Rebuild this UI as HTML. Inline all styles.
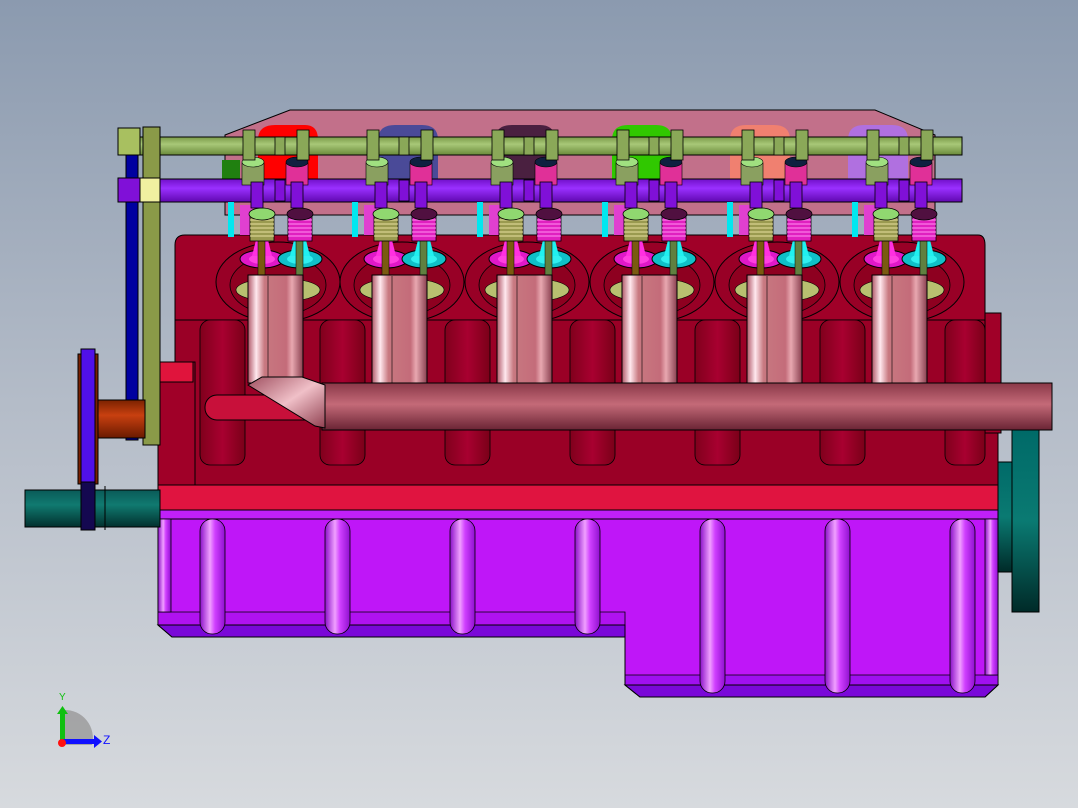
<!DOCTYPE html>
<html><head><meta charset="utf-8"><style>
html,body{margin:0;padding:0;width:1078px;height:808px;overflow:hidden}
svg{display:block}
</style></head><body>
<svg width="1078" height="808" viewBox="0 0 1078 808" xmlns="http://www.w3.org/2000/svg">
<defs>
<linearGradient id="bg" x1="0" y1="0" x2="0" y2="1"><stop offset="0" stop-color="#8b9aaf"/><stop offset="0.5" stop-color="#b4bcc8"/><stop offset="1" stop-color="#d7dade"/></linearGradient>
<linearGradient id="pipe" x1="0" y1="0" x2="1" y2="0"><stop offset="0" stop-color="#b05868"/><stop offset="0.15" stop-color="#ffe8ee"/><stop offset="0.3" stop-color="#c87880"/><stop offset="0.7" stop-color="#c46c7a"/><stop offset="0.8" stop-color="#e8a8b0"/><stop offset="1" stop-color="#8a4050"/></linearGradient>
<linearGradient id="man" x1="0" y1="0" x2="0" y2="1"><stop offset="0" stop-color="#8a3848"/><stop offset="0.45" stop-color="#c46a78"/><stop offset="1" stop-color="#6a2434"/></linearGradient>
<linearGradient id="noz" x1="0" y1="0" x2="1" y2="1"><stop offset="0" stop-color="#a05060"/><stop offset="0.5" stop-color="#f0c0c8"/><stop offset="1" stop-color="#904050"/></linearGradient>
<linearGradient id="rib" x1="0" y1="0" x2="1" y2="0"><stop offset="0" stop-color="#8a10c8"/><stop offset="0.4" stop-color="#f0a0ff"/><stop offset="0.6" stop-color="#d040ff"/><stop offset="1" stop-color="#9010d0"/></linearGradient>
<linearGradient id="teal" x1="0" y1="0" x2="0" y2="1"><stop offset="0" stop-color="#0a5a58"/><stop offset="0.4" stop-color="#107a70"/><stop offset="1" stop-color="#02302e"/></linearGradient>
<linearGradient id="tealv" x1="0" y1="0" x2="0" y2="1"><stop offset="0" stop-color="#006a68"/><stop offset="0.5" stop-color="#0a7a72"/><stop offset="1" stop-color="#002a28"/></linearGradient>
<linearGradient id="orange" x1="0" y1="0" x2="0" y2="1"><stop offset="0" stop-color="#7a2200"/><stop offset="0.4" stop-color="#c84010"/><stop offset="1" stop-color="#6a1a00"/></linearGradient>
<linearGradient id="cam" x1="0" y1="0" x2="0" y2="1"><stop offset="0" stop-color="#7a9a48"/><stop offset="0.4" stop-color="#a8c878"/><stop offset="1" stop-color="#6a8a3a"/></linearGradient>
<linearGradient id="purp" x1="0" y1="0" x2="0" y2="1"><stop offset="0" stop-color="#7010c8"/><stop offset="0.4" stop-color="#9a30ff"/><stop offset="1" stop-color="#6008b0"/></linearGradient>
<linearGradient id="redcyl" x1="0" y1="0" x2="1" y2="0"><stop offset="0" stop-color="#80001c"/><stop offset="0.5" stop-color="#a80030"/><stop offset="1" stop-color="#7a0018"/></linearGradient>
<g id="cyl">
  <ellipse cx="30" cy="282" rx="62" ry="40" fill="#980026" stroke="#000" stroke-width="1"/>
  <ellipse cx="30" cy="285" rx="48" ry="30" fill="#8e0020" stroke="#000" stroke-width="0.8"/>
  <ellipse cx="30" cy="290" rx="42" ry="12" fill="#b8c070" stroke="#000" stroke-width="0.6"/>
  <rect x="-20" y="202" width="6" height="35" fill="#00e8f0"/>
  <rect x="-8" y="205" width="14" height="30" fill="#e040d0"/>
  <ellipse cx="14" cy="259" rx="22" ry="9" fill="#e018c8" stroke="#000" stroke-width="1"/>
  <ellipse cx="14" cy="259" rx="13" ry="5" fill="#ff40e0"/>
  <ellipse cx="52" cy="259" rx="22" ry="9" fill="#10c0c8" stroke="#000" stroke-width="1"/>
  <ellipse cx="52" cy="259" rx="13" ry="5" fill="#30f0f0"/>
  <path d="M8 240 L20 240 L24 256 L4 256Z" fill="#ff30e0"/>
  <path d="M46 240 L58 240 L62 256 L42 256Z" fill="#20f0f0"/>
  <rect x="10" y="235" width="7" height="45" fill="#7a5a10" stroke="#000" stroke-width="0.5"/>
  <rect x="48" y="235" width="7" height="45" fill="#608040" stroke="#000" stroke-width="0.5"/>
  <rect x="2" y="215" width="24" height="26" fill="#9a9a50" stroke="#000" stroke-width="0.8"/>
  <path d="M2 220h24M2 224h24M2 228h24M2 232h24M2 236h24" stroke="#e8e0a0" stroke-width="1"/>
  <ellipse cx="14" cy="214" rx="13" ry="6" fill="#90d870" stroke="#000" stroke-width="0.8"/>
  <rect x="40" y="215" width="24" height="26" fill="#e020c0" stroke="#000" stroke-width="0.8"/>
  <path d="M40 220h24M40 224h24M40 228h24M40 232h24M40 236h24" stroke="#ff90f0" stroke-width="1"/>
  <ellipse cx="52" cy="214" rx="13" ry="6" fill="#501040" stroke="#000" stroke-width="0.8"/>
  <rect x="-6" y="163" width="22" height="22" fill="#8aa060" stroke="#000" stroke-width="0.6"/>
  <ellipse cx="5" cy="162" rx="11" ry="5" fill="#a0e080" stroke="#000" stroke-width="0.6"/>
  <rect x="38" y="163" width="22" height="22" fill="#e03098" stroke="#000" stroke-width="0.6"/>
  <ellipse cx="49" cy="162" rx="11" ry="5" fill="#102040" stroke="#000" stroke-width="0.6"/>
  <rect x="0" y="275" width="55" height="108" fill="url(#pipe)" stroke="#000" stroke-width="1"/>
  <line x1="20" y1="276" x2="20" y2="383" stroke="#000" stroke-width="0.6"/>
  <rect x="-5" y="130" width="12" height="30" fill="#8aa858" stroke="#000" stroke-width="0.8"/>
  <rect x="27" y="137" width="10" height="18" fill="#8aa858" stroke="#000" stroke-width="0.8"/>
  <rect x="49" y="130" width="12" height="30" fill="#8aa858" stroke="#000" stroke-width="0.8"/>
  <rect x="3" y="182" width="12" height="26" fill="#8010d8" stroke="#000" stroke-width="0.8"/>
  <rect x="27" y="180" width="10" height="21" fill="#8010d8" stroke="#000" stroke-width="0.8"/>
  <rect x="43" y="182" width="12" height="26" fill="#8010d8" stroke="#000" stroke-width="0.8"/>
</g>
</defs>
<rect width="1078" height="808" fill="url(#bg)"/>

<path d="M225 135 L290 110 L875 110 L935 135 L935 215 L225 215Z" fill="#c2708a" stroke="#000" stroke-width="1"/>
<path d="M258 140 Q258 125 275 125 L305 125 Q318 125 318 140 L318 185 L258 185Z" fill="#ff0000"/>
<path d="M378 140 Q378 125 395 125 L422 125 Q438 125 438 140 L438 185 L378 185Z" fill="#4a4a98"/>
<path d="M495 140 Q495 125 512 125 L540 125 Q555 125 555 140 L555 185 L495 185Z" fill="#4a2040"/>
<path d="M612 140 Q612 125 628 125 L656 125 Q672 125 672 140 L672 185 L612 185Z" fill="#30c800"/>
<path d="M730 140 Q730 125 746 125 L774 125 Q790 125 790 140 L790 185 L730 185Z" fill="#f08070"/>
<path d="M848 140 Q848 125 864 125 L892 125 Q908 125 908 140 L908 185 L848 185Z" fill="#b070e0"/>
<path d="M222 160 L240 160 L240 185 L222 185Z" fill="#208010"/>

<rect x="118" y="137" width="844" height="18" fill="url(#cam)" stroke="#000" stroke-width="1"/>
<path d="M185 235 L978 235 Q985 235 985 245 L985 320 L175 320 L175 245 Q175 235 185 235Z" fill="#a00028" stroke="#000" stroke-width="1"/>
<rect x="175" y="320" width="823" height="165" fill="#9a0026" stroke="#000" stroke-width="1"/>
<rect x="985" y="313" width="16" height="120" fill="#a00028" stroke="#000" stroke-width="1"/>
<g fill="url(#redcyl)" stroke="#000" stroke-width="0.8">
<rect x="200" y="320" width="45" height="145" rx="10"/><rect x="320" y="320" width="45" height="145" rx="10"/>
<rect x="445" y="320" width="45" height="145" rx="10"/><rect x="570" y="320" width="45" height="145" rx="10"/>
<rect x="695" y="320" width="45" height="145" rx="10"/><rect x="820" y="320" width="45" height="145" rx="10"/>
<rect x="945" y="320" width="40" height="145" rx="10"/>
</g>
<rect x="118" y="179" width="844" height="23" fill="url(#purp)" stroke="#000" stroke-width="1"/>

<use href="#cyl" x="248"/><use href="#cyl" x="372"/><use href="#cyl" x="497"/>
<use href="#cyl" x="622"/><use href="#cyl" x="747"/><use href="#cyl" x="872"/>

<rect x="158" y="362" width="37" height="123" fill="#a00028" stroke="#000" stroke-width="1"/>
<rect x="158" y="362" width="35" height="20" fill="#e0143c" stroke="#000" stroke-width="1"/>
<rect x="205" y="395" width="125" height="25" rx="12" fill="#c8103a" stroke="#000" stroke-width="1"/>
<rect x="322" y="383" width="730" height="47" fill="url(#man)" stroke="#000" stroke-width="1"/>
<path d="M248 385 L262 377 L302 377 L325 385 L325 428 L315 426Z" fill="url(#noz)" stroke="#000" stroke-width="1"/>
<rect x="158" y="485" width="840" height="25" fill="#e01440" stroke="#000" stroke-width="1"/>
<rect x="158" y="510" width="840" height="9" fill="#c020f8" stroke="#000" stroke-width="1"/>

<!-- oil pan -->
<path d="M158 519 L998 519 L998 685 L985 697 L640 697 L625 685 L625 637 L172 637 L158 625Z" fill="#bf16f8" stroke="#000" stroke-width="1"/>
<path d="M158 612 L625 612 L625 625 L158 625Z" fill="#b012f0" stroke="#000" stroke-width="0.8"/>
<path d="M158 625 L172 637 L625 637 L625 625Z" fill="#7a08d8" stroke="#000" stroke-width="1"/>
<path d="M625 675 L998 675 L998 685 L625 685Z" fill="#a010f0" stroke="#000" stroke-width="0.8"/>
<path d="M625 685 L640 697 L985 697 L998 685Z" fill="#7a08d8" stroke="#000" stroke-width="1"/>
<path d="M625 625 L625 685" stroke="#000" stroke-width="1"/>
<g fill="url(#rib)" stroke="#000" stroke-width="0.8">
<rect x="200" y="519" width="25" height="115" rx="12"/><rect x="325" y="519" width="25" height="115" rx="12"/>
<rect x="450" y="519" width="25" height="115" rx="12"/><rect x="575" y="519" width="25" height="115" rx="12"/>
<rect x="700" y="519" width="25" height="174" rx="12"/><rect x="825" y="519" width="25" height="174" rx="12"/>
<rect x="950" y="519" width="25" height="174" rx="12"/>
<rect x="158" y="519" width="13" height="93"/>
<rect x="985" y="519" width="13" height="156"/>
</g>

<rect x="998" y="462" width="16" height="110" fill="url(#tealv)" stroke="#000" stroke-width="1"/>
<rect x="1012" y="430" width="27" height="182" fill="url(#tealv)" stroke="#000" stroke-width="1"/>

<rect x="126" y="128" width="12" height="312" fill="#0000a0" stroke="#000" stroke-width="1"/>
<rect x="143" y="127" width="17" height="318" fill="#8a9a48" stroke="#000" stroke-width="1"/>
<rect x="118" y="128" width="22" height="27" fill="#a8c060" stroke="#000" stroke-width="1"/>
<rect x="118" y="178" width="22" height="24" fill="#8010d8" stroke="#000" stroke-width="1"/>
<rect x="140" y="178" width="20" height="24" fill="#f0f0a0" stroke="#000" stroke-width="1"/>
<rect x="98" y="400" width="47" height="38" fill="url(#orange)" stroke="#000" stroke-width="1"/>
<rect x="25" y="490" width="135" height="37" fill="url(#teal)" stroke="#000" stroke-width="1"/>
<line x1="105" y1="486" x2="105" y2="530" stroke="#000"/>
<rect x="78" y="354" width="20" height="130" fill="#7a2000" stroke="#000" stroke-width="1"/>
<rect x="81" y="349" width="14" height="133" fill="#5010e8" stroke="#000" stroke-width="1"/>
<rect x="81" y="482" width="14" height="48" fill="#140850" stroke="#000" stroke-width="1"/>

<path d="M64 710 L64 745 L92 745 A28 28 0 0 0 64 710Z" fill="#999" opacity="0.8"/>
<rect x="60" y="712" width="5" height="33" fill="#10c010"/>
<path d="M57 714 L62.5 706 L68 714Z" fill="#10c010"/>
<rect x="63" y="739" width="32" height="5" fill="#1010ff"/>
<path d="M94 735 L102 741.5 L94 748Z" fill="#1010ff"/>
<circle cx="62" cy="743" r="4" fill="#ff1010"/>
<text x="59" y="700" font-family="Liberation Sans, sans-serif" font-size="10" fill="#10c010">Y</text>
<text x="103" y="744" font-family="Liberation Sans, sans-serif" font-size="12" fill="#1010ff">Z</text>
</svg>
</body></html>
